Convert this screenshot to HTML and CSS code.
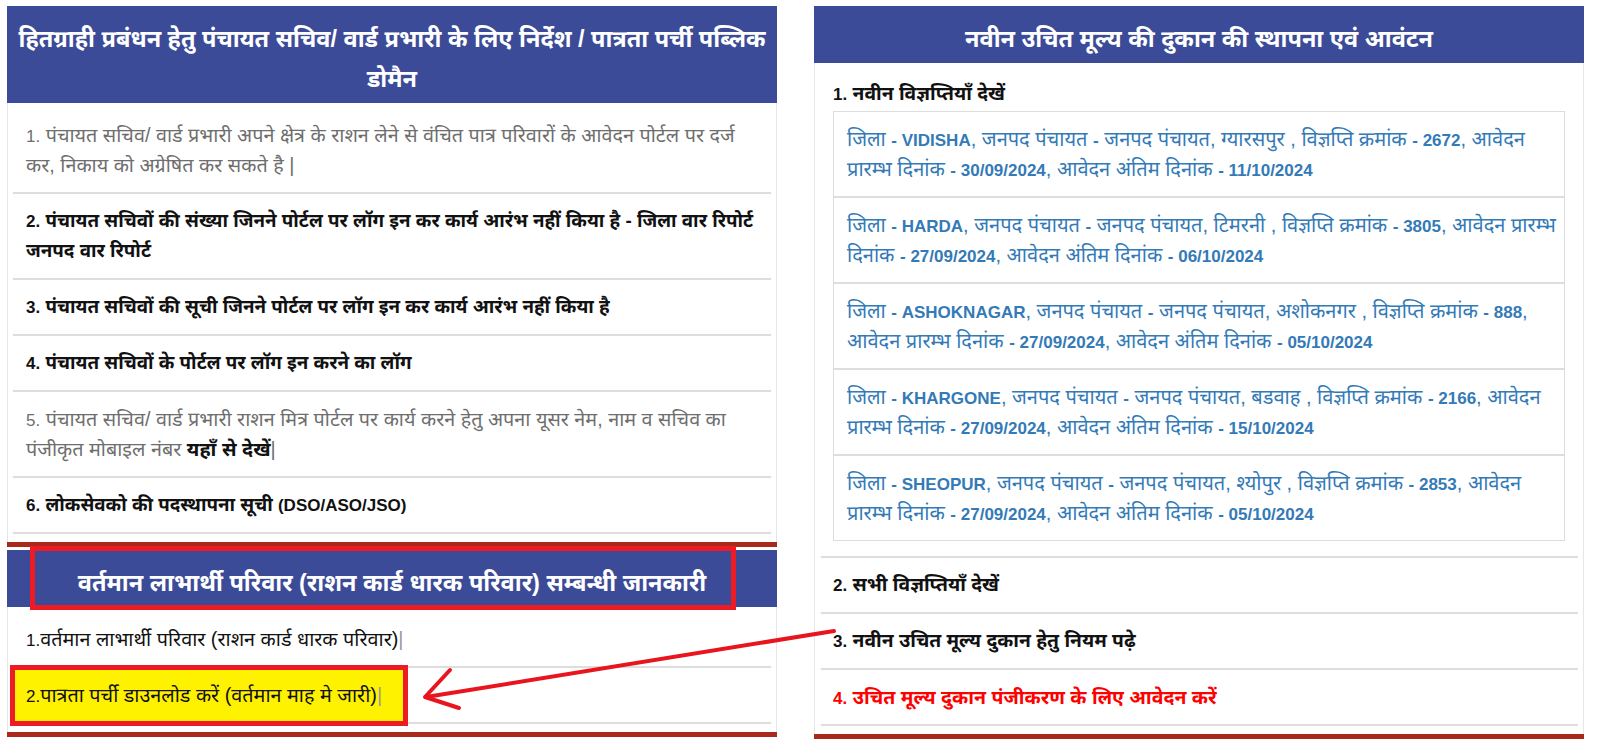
FILE: index.html
```html
<!DOCTYPE html>
<html lang="hi">
<head>
<meta charset="utf-8">
<title>पात्रता पर्ची</title>
<link rel="stylesheet" href="styles.css">
</head>
<body>
<div class="page">
  <div class="col">
    <section class="panel">
      <h2 class="panel-head">हितग्राही प्रबंधन हेतु पंचायत सचिव/ वार्ड प्रभारी के लिए निर्देश / पात्रता पर्ची पब्लिक<br>डोमैन</h2>
      <ul class="items">
        <li class="muted"><span class="lat">1.</span> पंचायत सचिव/ वार्ड प्रभारी अपने क्षेत्र के राशन लेने से वंचित पात्र परिवारों के आवेदन पोर्टल पर दर्ज<br>कर, निकाय को अग्रेषित कर सकते है |</li>
        <li class="strong"><span class="lat">2.</span> पंचायत सचिवों की संख्या जिनने पोर्टल पर लॉग इन कर कार्य आरंभ नहीं किया है - जिला वार रिपोर्ट<br>जनपद वार रिपोर्ट</li>
        <li class="strong"><span class="lat">3.</span> पंचायत सचिवों की सूची जिनने पोर्टल पर लॉग इन कर कार्य आरंभ नहीं किया है</li>
        <li class="strong"><span class="lat">4.</span> पंचायत सचिवों के पोर्टल पर लॉग इन करने का लॉग</li>
        <li class="muted"><span class="lat">5.</span> पंचायत सचिव/ वार्ड प्रभारी राशन मित्र पोर्टल पर कार्य करने हेतु अपना यूसर नेम, नाम व सचिव का<br>पंजीकृत मोबाइल नंबर <b class="dark">यहाँ से देखें</b>|</li>
        <li class="strong"><span class="lat">6.</span> लोकसेवको की पदस्थापना सूची <span class="lat">(DSO/ASO/JSO)</span></li>
      </ul>
    </section>
    <section class="panel panel-low">
      <h2 class="panel-head">वर्तमान लाभार्थी परिवार (राशन कार्ड धारक परिवार) सम्बन्धी जानकारी<span class="mark"></span></h2>
      <ul class="items items-low">
        <li class="plain"><span class="lat">1.</span>वर्तमान लाभार्थी परिवार (राशन कार्ड धारक परिवार)<span class="pipe">|</span></li>
        <li class="plain hl-row"><div class="hl"><span class="lat">2.</span>पात्रता पर्ची डाउनलोड करें (वर्तमान माह मे जारी)<span class="pipe">|</span></div></li>
      </ul>
    </section>
  </div>
  <div class="col">
    <section class="panel">
      <h2 class="panel-head">नवीन उचित मूल्य की दुकान की स्थापना एवं आवंटन</h2>
      <ul class="items items-right">
        <li class="strong first"><span class="lat">1.</span> नवीन विज्ञप्तियाँ देखें
          <div class="cards">
            <a class="card">जिला <b>- VIDISHA</b>, जनपद पंचायत <b>-</b> जनपद पंचायत, ग्यारसपुर , विज्ञप्ति क्रमांक <b>- 2672</b>, आवेदन<br>प्रारम्भ दिनांक <b>- 30/09/2024</b>, आवेदन अंतिम दिनांक <b>- 11/10/2024</b></a>
            <a class="card">जिला <b>- HARDA</b>, जनपद पंचायत <b>-</b> जनपद पंचायत, टिमरनी , विज्ञप्ति क्रमांक <b>- 3805</b>, आवेदन प्रारम्भ<br>दिनांक <b>- 27/09/2024</b>, आवेदन अंतिम दिनांक <b>- 06/10/2024</b></a>
            <a class="card">जिला <b>- ASHOKNAGAR</b>, जनपद पंचायत <b>-</b> जनपद पंचायत, अशोकनगर , विज्ञप्ति क्रमांक <b>- 888</b>,<br>आवेदन प्रारम्भ दिनांक <b>- 27/09/2024</b>, आवेदन अंतिम दिनांक <b>- 05/10/2024</b></a>
            <a class="card">जिला <b>- KHARGONE</b>, जनपद पंचायत <b>-</b> जनपद पंचायत, बडवाह , विज्ञप्ति क्रमांक <b>- 2166</b>, आवेदन<br>प्रारम्भ दिनांक <b>- 27/09/2024</b>, आवेदन अंतिम दिनांक <b>- 15/10/2024</b></a>
            <a class="card">जिला <b>- SHEOPUR</b>, जनपद पंचायत <b>-</b> जनपद पंचायत, श्योपुर , विज्ञप्ति क्रमांक <b>- 2853</b>, आवेदन<br>प्रारम्भ दिनांक <b>- 27/09/2024</b>, आवेदन अंतिम दिनांक <b>- 05/10/2024</b></a>
          </div>
        </li>
        <li class="strong"><span class="lat">2.</span> सभी विज्ञप्तियाँ देखें</li>
        <li class="strong"><span class="lat">3.</span> नवीन उचित मूल्य दुकान हेतु नियम पढ़े</li>
        <li class="red"><span class="lat">4.</span> उचित मूल्य दुकान पंजीकरण के लिए आवेदन करें</li>
      </ul>
    </section>
  </div>
  <svg class="arrow" width="1600" height="740" viewBox="0 0 1600 740" aria-hidden="true">
    <path d="M834 631 L426 697" stroke="#e8141e" stroke-width="4" stroke-linecap="round" fill="none"/>
    <path d="M450 670 L425 697 L459 708" stroke="#e8141e" stroke-width="4" stroke-linecap="round" stroke-linejoin="round" fill="none"/>
  </svg>
</div>
</body>
</html>
```

FILE: styles.css
```css
html, body {
  margin: 0;
  padding: 0;
  background: #ffffff;
}

body {
  font-family: "Liberation Sans", "Noto Sans Devanagari", "Lohit Devanagari", "Noto Sans", sans-serif;
  font-size: 20px;
  color: #111;
}

.page {
  position: relative;
  box-sizing: border-box;
  width: 1600px;
  height: 740px;
  overflow: hidden;
  padding: 6px 0 0 7px;
  display: grid;
  grid-template-columns: 770px 770px;
  column-gap: 37px;
  align-items: start;
}

.col {
  display: flex;
  flex-direction: column;
}

.panel {
  background: #fff;
  border-bottom: 5px solid #a92a1c;
}

.panel-low {
  margin-top: 3px;
}

.panel-head {
  position: relative;
  margin: 0;
  padding: 13px 4px 4px;
  background: #3b4b97;
  color: #fff;
  font-size: 23.5px;
  font-weight: bold;
  line-height: 40px;
  text-align: center;
  white-space: nowrap;
}

.mark {
  position: absolute;
  top: -4px;
  bottom: -3px;
  left: 23px;
  right: 41px;
  border: 5px solid #ed1c24;
}

.items {
  list-style: none;
  margin: 0;
  padding: 5px 5px 8px 5px;
  border-left: 1px solid #e6e6e6;
  border-right: 1px solid #e6e6e6;
}

.items li {
  padding: 12px 13px;
  line-height: 30px;
  border-bottom: 2px solid #dddddd;
  white-space: nowrap;
}

.lat {
  font-size: 17px;
  line-height: 1;
}

.muted {
  color: #6e6e6e;
  font-size: 19.8px;
}

.dark {
  color: #111;
}

.strong {
  color: #111;
  font-weight: bold;
  font-size: 18.8px;
}

.plain {
  color: #111;
  font-size: 19.8px;
}

.red {
  color: #ff0000;
  font-weight: bold;
  font-size: 19.5px;
}

.items-right .strong {
  font-size: 19.3px;
}

.pipe {
  color: #999;
  font-weight: normal;
  line-height: 1;
}

.items li.hl-row {
  padding: 0;
}

.hl {
  box-sizing: border-box;
  width: 398px;
  height: 61px;
  margin: -3px 0 -4px -3px;
  padding: 10px 8px 10px 11px;
  border: 5px solid #ed1c24;
  background: #fff200;
  white-space: nowrap;
}

.items-right {
  padding: 4px 5px 8px 6px;
}

.items-right li {
  padding: 12px 13px 12px 12px;
}

.cards {
  display: flex;
  flex-direction: column;
  margin: 2px 0 3px;
}

.card {
  display: block;
  padding: 12px 4px 12px 13px;
  border: 1px solid #dddddd;
  color: #337ab7;
  font-weight: normal;
  font-size: 20px;
  line-height: 30px;
  text-decoration: none;
  white-space: nowrap;
}

.card b {
  font-size: 17px;
  line-height: 1;
}

.arrow {
  position: absolute;
  left: 0;
  top: 0;
  pointer-events: none;
}
```
